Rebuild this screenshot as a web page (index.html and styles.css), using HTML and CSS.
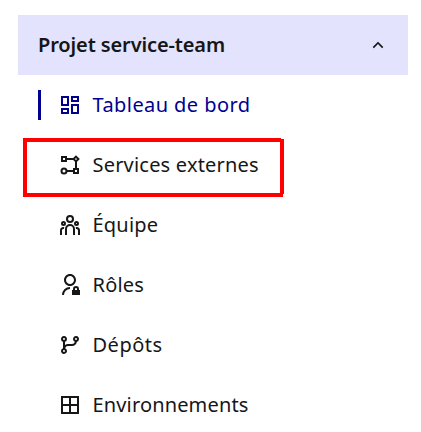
FILE: index.html
```html
<!DOCTYPE html>
<html lang="fr">
<head>
<meta charset="utf-8">
<title>Projet service-team</title>
<link rel="stylesheet" href="styles.css">
</head>
<body>
<nav class="sidemenu">
  <button class="project" type="button">
    <span class="project-name">Projet service-team</span>
    <svg class="chevron" viewBox="0 0 24 24"><path d="M12 10.828l-4.95 4.95-1.414-1.414L12 8l6.364 6.364-1.414 1.414z"/></svg>
  </button>
  <ul class="menu">
    <li class="item active">
      <svg class="icon" viewBox="0 0 24 24"><path fill-rule="evenodd" d="M3 3h8v10H3zM5 5v6h4V5zM13 3h8v6h-8zM15 5v2h4V5zM3 15h8v6H3zM5 17v2h4v-2zM13 11h8v10h-8zM15 13v6h4v-6z"/></svg>
      <span class="label dashboard">Tableau de bord</span>
    </li>
    <li class="item highlighted">
      <svg class="icon" viewBox="0 0 24 24"><g fill="none" stroke="currentColor" stroke-width="2"><path d="M4 4h4v4H4zM16 16h4v4h-4zM8 6h7.5M18 8.500V16M8.500 18H16M18 3.600 20.400 6 18 8.400 15.600 6z"/><circle cx="6" cy="18" r="2.500"/></g></svg>
      <span class="label services">Services externes</span>
    </li>
    <li class="item">
      <svg class="icon" viewBox="0 0 24 24"><path d="M12 11a5 5 0 0 1 5 5v6h-2v-6a3 3 0 0 0-2.824-2.995L12 13a3 3 0 0 0-2.995 2.824L9 16v6H7v-6a5 5 0 0 1 5-5zm-6.500 3c.279 0 .55.033.81.094a5.947 5.947 0 0 0-.301 1.575L6 16v.086a1.492 1.492 0 0 0-.356-.08L5.500 16a1.500 1.500 0 0 0-1.493 1.356L4 17.500V22H2v-4.500A3.500 3.500 0 0 1 5.500 14zm13 0a3.500 3.500 0 0 1 3.500 3.500V22h-2v-4.500a1.500 1.500 0 0 0-1.356-1.493L18.500 16c-.175 0-.343.03-.5.085V16c0-.666-.108-1.306-.309-1.904.259-.063.53-.096.809-.096zm-13-6a2.500 2.500 0 1 1 0 5 2.500 2.500 0 0 1 0-5zm13 0a2.500 2.500 0 1 1 0 5 2.500 2.500 0 0 1 0-5zm-13 2a.5.5 0 1 0 0 1 .5.5 0 0 0 0-1zm13 0a.5.5 0 1 0 0 1 .5.5 0 0 0 0-1zM12 2a4 4 0 1 1 0 8 4 4 0 0 1 0-8zm0 2a2 2 0 1 0 0 4 2 2 0 0 0 0-4z"/></svg>
      <span class="label team">Équipe</span>
    </li>
    <li class="item">
      <svg class="icon" viewBox="0 0 24 24"><path d="M12 14v2a6 6 0 0 0-6 6H4a8 8 0 0 1 8-8zm0-1c-3.315 0-6-2.685-6-6s2.685-6 6-6 6 2.685 6 6-2.685 6-6 6zm0-2c2.210 0 4-1.790 4-4s-1.790-4-4-4-4 1.790-4 4 1.790 4 4 4zm9 6h1v5h-8v-5h1v-1a3 3 0 0 1 6 0v1zm-2 0v-1a1 1 0 0 0-2 0v1h2z"/></svg>
      <span class="label roles">Rôles</span>
    </li>
    <li class="item">
      <svg class="icon" viewBox="0 0 24 24"><path d="M7.105 15.210A3.001 3.001 0 1 1 5 15.170V8.830a3.001 3.001 0 1 1 2 0V12c.836-.628 1.874-1 3-1h4a3.001 3.001 0 0 0 2.895-2.210 3.001 3.001 0 1 1 2.032.064A5.001 5.001 0 0 1 14 13h-4a3.001 3.001 0 0 0-2.895 2.210zM6 17a1 1 0 1 0 0 2 1 1 0 0 0 0-2zM6 5a1 1 0 1 0 0 2 1 1 0 0 0 0-2zm12 0a1 1 0 1 0 0 2 1 1 0 0 0 0-2z"/></svg>
      <span class="label repos">Dépôts</span>
    </li>
    <li class="item">
      <svg class="icon" viewBox="0 0 24 24"><path d="M4 4h16v16H4zM12 4v16M4 12h16" fill="none" stroke="currentColor" stroke-width="2"/></svg>
      <span class="label environments">Environnements</span>
    </li>
  </ul>
</nav>
</body>
</html>
```

FILE: styles.css
```css
*,
*::before,
*::after {
  box-sizing: border-box;
}

body {
  margin: 0;
  background: #fff;
  color: #161616;
  font: 20px/30px "Noto Sans", "Open Sans", sans-serif;
  overflow: hidden;
}

.sidemenu {
  width: 390px;
  margin: 15px 0 0 18px;
}

.project {
  display: flex;
  align-items: center;
  justify-content: space-between;
  width: 100%;
  height: 60px;
  padding: 0 20px;
  border: 0;
  background: #e3e3fd;
  color: inherit;
  font: inherit;
  font-weight: 600;
}

.project-name {
  white-space: nowrap;
  letter-spacing: -0.12px;
}

.chevron {
  width: 20px;
  height: 20px;
  fill: currentColor;
}

.menu {
  margin: 0;
  padding: 0;
  list-style: none;
}

.item {
  position: relative;
  display: flex;
  align-items: center;
  gap: 10.5px;
  height: 60px;
  padding-left: 40px;
}

.icon {
  flex: none;
  width: 24px;
  height: 24px;
  fill: currentColor;
}

.label {
  white-space: nowrap;
  letter-spacing: 0.2px;
}

.dashboard {
  letter-spacing: 0.42px;
}

.repos {
  letter-spacing: 0.5px;
}

.environments {
  letter-spacing: 0.15px;
}

.active {
  color: #000091;
}

.active::before {
  content: "";
  position: absolute;
  left: 20px;
  top: 15px;
  width: 3px;
  height: 30px;
  background: currentColor;
}

.highlighted::after {
  content: "";
  position: absolute;
  left: 5px;
  top: 3px;
  width: 261px;
  height: 59px;
  border: 4px solid #f00;
  clip-path: polygon(0 0, 258px 0, 258px 1px, 261px 1px, 261px 56px, 260px 56px, 260px 59px, 0 59px);
}
```
